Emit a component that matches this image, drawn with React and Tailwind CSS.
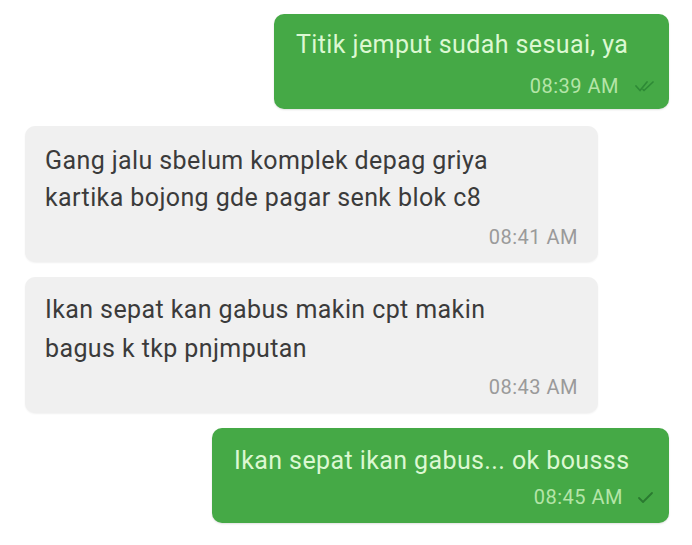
import React from "react";

const font = { fontFamily: "Roboto, 'Noto Sans', sans-serif" };

function DoubleCheck() {
  return (
    <svg width="20" height="14" viewBox="0 0 20 14" fill="none" className="ml-[16px]">
      <path d="M1 7l4 4.5L12 3" stroke="#2e8a36" strokeWidth="1.7" strokeLinecap="round" strokeLinejoin="round" />
      <path d="M8 10.5l1 1L18 3" stroke="#2e8a36" strokeWidth="1.7" strokeLinecap="round" strokeLinejoin="round" />
    </svg>
  );
}

function SingleCheck() {
  return (
    <svg width="18" height="14" viewBox="0 0 18 14" fill="none" className="ml-[14px]">
      <path d="M2 8l4 4L15 3" stroke="#2a7a30" strokeWidth="1.8" strokeLinecap="round" strokeLinejoin="round" />
    </svg>
  );
}

export default function App() {
  return (
    <div className="w-[692px] h-[545px] bg-white overflow-hidden flex flex-col pt-[14px]" style={font}>
      <div className="flex justify-end pr-[23px]">
        <div className="w-[395px] h-[95px] rounded-[10px] bg-[#45a946] shadow-[0_1px_2px_rgba(0,0,0,0.12)] pl-[22px] pr-[14px] pt-[17px] flex flex-col">
          <div className="text-[25px] leading-[28px] tracking-[0.4px] text-[#dcf8d2]">Titik jemput sudah sesuai, ya</div>
          <div className="flex items-center justify-end mt-[16px]">
            <span className="text-[20px] leading-[22px] text-[#b4e5a8] tracking-[0.5px]">08:39 AM</span>
            <DoubleCheck />
          </div>
        </div>
      </div>

      <div className="flex justify-start pl-[25px] mt-[17px]">
        <div className="w-[573px] h-[136px] rounded-[10px] bg-[#f0f0f0] shadow-[0_1px_2px_rgba(0,0,0,0.06)] pl-[20px] pr-[20px] pt-[16px] flex flex-col">
          <div className="text-[25px] leading-[37px] tracking-[0.4px] text-[#3b3b3b]">
            Gang jalu sbelum komplek depag griya
            <br />
            kartika bojong gde pagar senk blok c8
          </div>
          <div className="flex justify-end mt-[10px]">
            <span className="text-[20px] leading-[22px] text-[#9a9a9a] tracking-[0.5px]">08:41 AM</span>
          </div>
        </div>
      </div>

      <div className="flex justify-start pl-[25px] mt-[15px]">
        <div className="w-[573px] h-[136px] rounded-[10px] bg-[#f0f0f0] shadow-[0_1px_2px_rgba(0,0,0,0.06)] pl-[20px] pr-[20px] pt-[13px] flex flex-col">
          <div className="text-[25px] leading-[39px] tracking-[0.4px] text-[#3b3b3b]">
            Ikan sepat kan gabus makin cpt makin
            <br />
            bagus k tkp pnjmputan
          </div>
          <div className="flex justify-end mt-[8px]">
            <span className="text-[20px] leading-[22px] text-[#9a9a9a] tracking-[0.5px]">08:43 AM</span>
          </div>
        </div>
      </div>

      <div className="flex justify-end pr-[23px] mt-[15px]">
        <div className="w-[457px] h-[95px] rounded-[10px] bg-[#45a946] shadow-[0_1px_2px_rgba(0,0,0,0.12)] pl-[22px] pr-[14px] pt-[19px] flex flex-col">
          <div className="text-[25px] leading-[28px] tracking-[0.4px] text-[#dcf8d2]">Ikan sepat ikan gabus... ok bousss</div>
          <div className="flex items-center justify-end mt-[11px]">
            <span className="text-[20px] leading-[22px] text-[#b4e5a8] tracking-[0.5px]">08:45 AM</span>
            <SingleCheck />
          </div>
        </div>
      </div>
    </div>
  );
}
